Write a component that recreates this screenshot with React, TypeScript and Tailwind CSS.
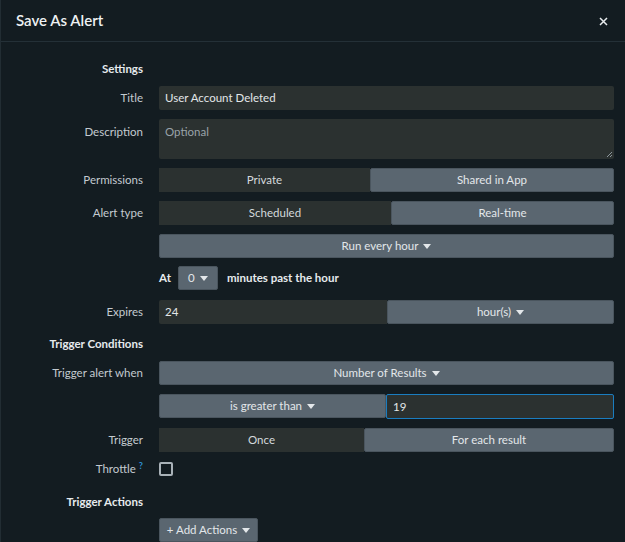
import React from 'react';

const font = { fontFamily: 'Lato, "Open Sans", "Liberation Sans", sans-serif' };

function Caret() {
  return (
    <svg width="8" height="5" viewBox="0 0 8 5" className="ml-[5px] inline-block">
      <path d="M0 0h8L4 5z" fill="currentColor" />
    </svg>
  );
}

function Label({ children, bold }: { children: React.ReactNode; bold?: boolean }) {
  return (
    <div
      className={`w-[142px] shrink-0 text-right text-[11.5px] ${
        bold ? 'font-bold text-[#e6eaed]' : 'text-[#c3cad0]'
      }`}
    >
      {children}
    </div>
  );
}

function Row({ label, bold, className, children }: { label?: React.ReactNode; bold?: boolean; className?: string; children?: React.ReactNode }) {
  return (
    <div className={`flex items-center gap-4 ${className ?? ''}`}>
      <Label bold={bold}>{label}</Label>
      <div className="flex w-[455px] items-center">{children}</div>
    </div>
  );
}

function Seg({ items, active, widths }: { items: string[]; active: number; widths: string[] }) {
  return (
    <div className="flex h-6 w-full rounded-[2px] bg-[#10171b]">
      {items.map((t, i) => (
        <div
          key={t}
          className={`flex h-full items-center justify-center text-[11.5px] ${widths[i]} ${
            i === active
              ? 'rounded-[2px] border border-[#4a555e] bg-[#5a6670] text-[#e3e7ea]'
              : 'bg-[#2b3130] text-[#d5dadd]'
          }`}
        >
          {t}
        </div>
      ))}
    </div>
  );
}

function Btn({ children, className }: { children: React.ReactNode; className?: string }) {
  return (
    <div
      className={`flex h-6 items-center justify-center rounded-[2px] border border-[#4a555e] bg-[#5a6670] text-[11.5px] text-[#e3e7ea] ${className ?? ''}`}
    >
      {children}
    </div>
  );
}

export default function App() {
  return (
    <div className="h-[542px] w-[625px] overflow-hidden border-l border-[#222d33] bg-[#131c21]" style={font}>
      <div className="flex h-[42px] items-center justify-between border-b border-[#243037] pl-[15px] pr-[17px]">
        <div className="text-[15px] font-semibold text-[#eef1f3]">Save As Alert</div>
        <svg width="9" height="9" viewBox="0 0 9 9" className="mt-[2px]">
          <path d="M1 1l7 7M8 1l-7 7" stroke="#e8ecee" strokeWidth="1.5" />
        </svg>
      </div>

      <div className="flex flex-col">
        <Row label="Settings" bold className="mt-[20px] h-[14px]" />

        <Row label="Title" className="mt-[10px]">
          <div className="flex h-6 w-full items-center rounded-[2px] bg-[#2b3130] px-[6px] text-[11.5px] text-[#e2e6e8]">
            User Account Deleted
          </div>
        </Row>

        <div className="mt-[9px] flex items-start gap-4">
          <Label>
            <div className="pt-[4px]">Description</div>
          </Label>
          <div className="relative h-10 w-[455px] rounded-[2px] bg-[#2b3130] px-[6px] pt-[4px] text-[11.5px] text-[#9aa3a9]">
            Optional
            <svg width="7" height="7" viewBox="0 0 7 7" className="absolute bottom-[1px] right-[1px]">
              <path d="M6 1L1 6M6 4L4 6" stroke="#8b959b" strokeWidth="1" />
            </svg>
          </div>
        </div>

        <Row label="Permissions" className="mt-[9px]">
          <Seg items={['Private', 'Shared in App']} active={1} widths={['w-[211px]', 'flex-1']} />
        </Row>

        <Row label="Alert type" className="mt-[9px]">
          <Seg items={['Scheduled', 'Real-time']} active={1} widths={['w-[232px]', 'flex-1']} />
        </Row>

        <Row className="mt-[9px]">
          <Btn className="w-full">
            Run every hour
            <Caret />
          </Btn>
        </Row>

        <Row className="mt-[8px]">
          <div className="flex items-center text-[11.5px] font-bold text-[#e6eaed]">
            <span>At</span>
            <Btn className="ml-[7px] w-10 font-normal">
              0
              <Caret />
            </Btn>
            <span className="ml-[9px]">minutes past the hour</span>
          </div>
        </Row>

        <Row label="Expires" className="mt-[10px]">
          <div className="flex h-6 w-full">
            <div className="flex h-full w-[228px] items-center rounded-l-[2px] bg-[#2b3130] px-[6px] text-[11.5px] text-[#e2e6e8]">
              24
            </div>
            <Btn className="flex-1">
              hour(s)
              <Caret />
            </Btn>
          </div>
        </Row>

        <Row label="Trigger Conditions" bold className="mt-[13px] h-[14px]" />

        <Row label="Trigger alert when" className="mt-[10px]">
          <Btn className="w-full">
            Number of Results
            <Caret />
          </Btn>
        </Row>

        <Row className="mt-[9px]">
          <div className="flex h-6 w-full">
            <Btn className="w-[227px]">
              is greater than
              <Caret />
            </Btn>
            <div className="flex h-[25px] flex-1 items-center rounded-[2px] border border-[#1a7dc0] bg-[#2b3130] px-[6px] text-[11.5px] text-[#e2e6e8]">
              19
            </div>
          </div>
        </Row>

        <Row label="Trigger" className="mt-[10px]">
          <Seg items={['Once', 'For each result']} active={1} widths={['w-[205px]', 'flex-1']} />
        </Row>

        <Row
          label={
            <span>
              Throttle<sup className="ml-[3px] text-[9px] font-bold text-[#2d8fd5]">?</sup>
            </span>
          }
          className="mt-[10px] h-[14px]"
        >
          <div className="h-[14px] w-[14px] rounded-[2px] border-2 border-[#a9b2b8]" />
        </Row>

        <Row label="Trigger Actions" bold className="mt-[19px] h-[14px]" />

        <Row className="mt-[9px]">
          <Btn className="w-[99px]">
            + Add Actions
            <Caret />
          </Btn>
        </Row>
      </div>
    </div>
  );
}
